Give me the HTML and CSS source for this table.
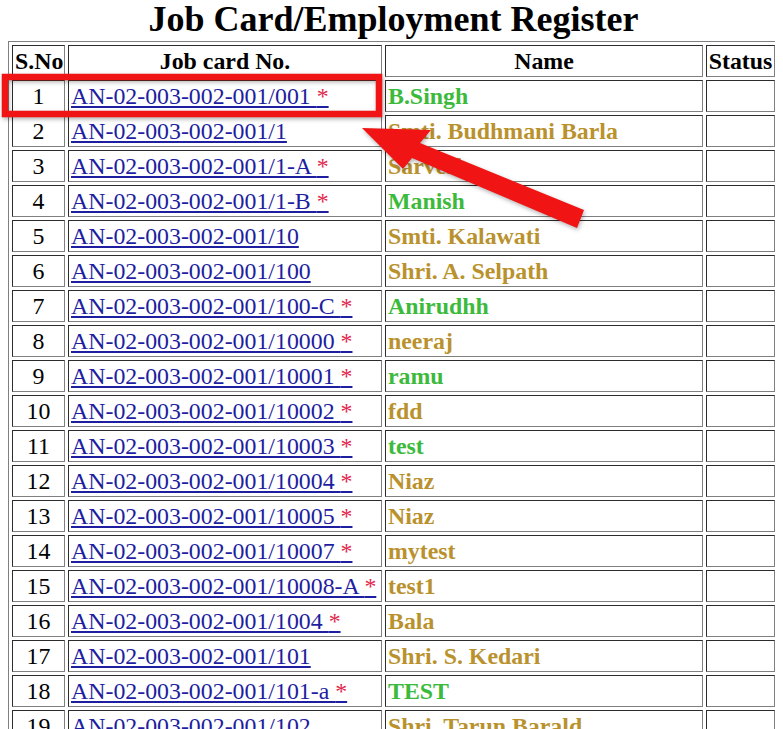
FILE: index.html
```html
<!DOCTYPE html>
<html>
<head>
<meta charset="utf-8">
<title>Job Card/Employment Register</title>
<link rel="stylesheet" href="styles.css">
</head>
<body>
<div class="wrap">
  <h1 class="title">Job Card/Employment Register</h1>
  <table class="reg">
    <thead>
      <tr><th class="c-no">S.No</th><th class="c-card">Job card No.</th><th class="c-name">Name</th><th class="c-status">Status</th></tr>
    </thead>
    <tbody>
      <tr><td class="no">1</td><td><a href="#">AN-02-003-002-001/001 <span class="star">*</span></a></td><td class="nm green">B.Singh</td><td></td></tr>
      <tr><td class="no">2</td><td><a href="#">AN-02-003-002-001/1</a></td><td class="nm gold">Smti. Budhmani Barla</td><td></td></tr>
      <tr><td class="no">3</td><td><a href="#">AN-02-003-002-001/1-A <span class="star">*</span></a></td><td class="nm gold">Sarvesh</td><td></td></tr>
      <tr><td class="no">4</td><td><a href="#">AN-02-003-002-001/1-B <span class="star">*</span></a></td><td class="nm green">Manish</td><td></td></tr>
      <tr><td class="no">5</td><td><a href="#">AN-02-003-002-001/10</a></td><td class="nm gold">Smti. Kalawati</td><td></td></tr>
      <tr><td class="no">6</td><td><a href="#">AN-02-003-002-001/100</a></td><td class="nm gold">Shri. A. Selpath</td><td></td></tr>
      <tr><td class="no">7</td><td><a href="#">AN-02-003-002-001/100-C <span class="star">*</span></a></td><td class="nm green">Anirudhh</td><td></td></tr>
      <tr><td class="no">8</td><td><a href="#">AN-02-003-002-001/10000 <span class="star">*</span></a></td><td class="nm gold">neeraj</td><td></td></tr>
      <tr><td class="no">9</td><td><a href="#">AN-02-003-002-001/10001 <span class="star">*</span></a></td><td class="nm green">ramu</td><td></td></tr>
      <tr><td class="no">10</td><td><a href="#">AN-02-003-002-001/10002 <span class="star">*</span></a></td><td class="nm gold">fdd</td><td></td></tr>
      <tr><td class="no">11</td><td><a href="#">AN-02-003-002-001/10003 <span class="star">*</span></a></td><td class="nm green">test</td><td></td></tr>
      <tr><td class="no">12</td><td><a href="#">AN-02-003-002-001/10004 <span class="star">*</span></a></td><td class="nm gold">Niaz</td><td></td></tr>
      <tr><td class="no">13</td><td><a href="#">AN-02-003-002-001/10005 <span class="star">*</span></a></td><td class="nm gold">Niaz</td><td></td></tr>
      <tr><td class="no">14</td><td><a href="#">AN-02-003-002-001/10007 <span class="star">*</span></a></td><td class="nm gold">mytest</td><td></td></tr>
      <tr><td class="no">15</td><td><a href="#">AN-02-003-002-001/10008-A <span class="star">*</span></a></td><td class="nm gold">test1</td><td></td></tr>
      <tr><td class="no">16</td><td><a href="#">AN-02-003-002-001/1004 <span class="star">*</span></a></td><td class="nm gold">Bala</td><td></td></tr>
      <tr><td class="no">17</td><td><a href="#">AN-02-003-002-001/101</a></td><td class="nm gold">Shri. S. Kedari</td><td></td></tr>
      <tr><td class="no">18</td><td><a href="#">AN-02-003-002-001/101-a <span class="star">*</span></a></td><td class="nm green">TEST</td><td></td></tr>
      <tr><td class="no">19</td><td><a href="#">AN-02-003-002-001/102</a></td><td class="nm gold">Shri. Tarun Barald</td><td></td></tr>
    </tbody>
  </table>
</div>
<svg class="annot" width="783" height="729" viewBox="0 0 783 729" xmlns="http://www.w3.org/2000/svg">
  <rect x="5" y="77" width="374" height="37" fill="none" stroke="#f01414" stroke-width="6.5"/>
  <polygon points="362,128 431,130 420,143 584,210 577,228 412,158 403,169" fill="#f01414"/>
</svg>
</body>
</html>
```
FILE: styles.css
```css
html {
  overflow: hidden;
}
body {
  margin: 0 8px;
  background: #fff;
  font-family: "Liberation Serif", "Times New Roman", serif;
  color: #000;
}
.wrap {
  width: 771px;
}
.title {
  margin: 0 0 3px;
  font-size: 36px;
  line-height: 38px;
  font-weight: bold;
  text-align: center;
}
.reg {
  width: 771px;
  table-layout: fixed;
  border-collapse: separate;
  border-spacing: 3px;
  border: 1px outset grey;
  font-size: 23.85px;
}
.reg th,
.reg td {
  box-sizing: border-box;
  border: 1px inset grey;
  padding: 0 2px;
  line-height: 30px;
  white-space: nowrap;
  overflow: hidden;
  vertical-align: middle;
}
.reg th {
  font-weight: bold;
  text-align: center;
}
.c-no { width: 53px; }
.c-card { width: 314px; }
.c-name { width: 318px; }
.c-status { width: 69px; }
.reg th.c-status { padding: 0 1px; }
.no {
  text-align: center;
}
.reg a {
  color: #1e1ea0;
  text-decoration: underline;
}
.star {
  color: #e2264c;
}
.nm {
  font-weight: bold;
}
.green {
  color: #3cba3c;
}
.gold {
  color: #b9922e;
}
.annot {
  position: absolute;
  left: 0;
  top: 0;
  pointer-events: none;
  filter: drop-shadow(1px 2px 2px rgba(0, 0, 0, 0.3));
}
```
